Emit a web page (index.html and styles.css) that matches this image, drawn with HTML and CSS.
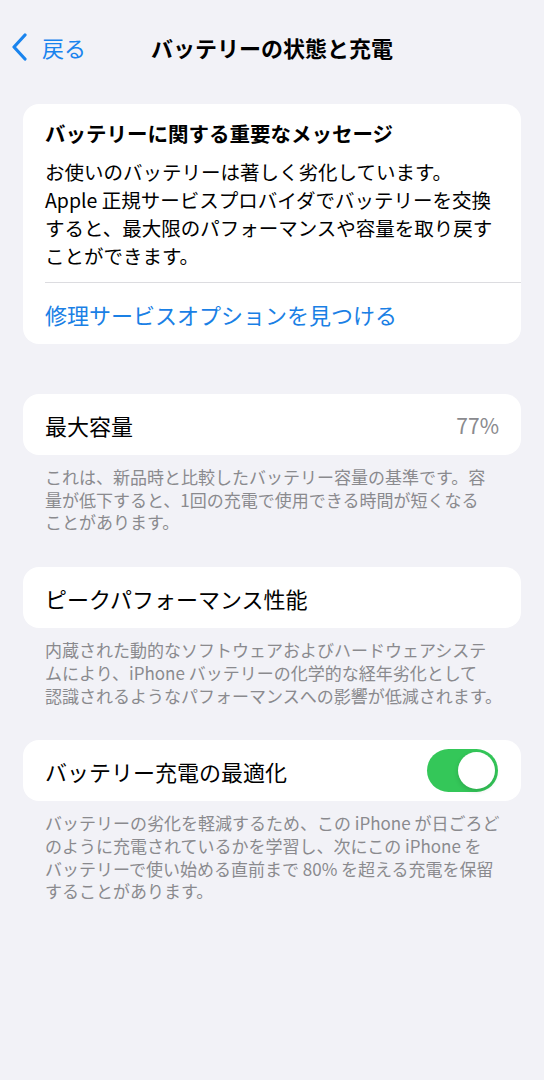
FILE: index.html
```html
<!DOCTYPE html>
<html lang="ja">
<head>
    <meta charset="UTF-8">
    <meta name="viewport" content="width=device-width, initial-scale=1.0">
    <title>バッテリーの状態と充電</title>
    <link rel="stylesheet" href="styles.css">
</head>
<body>
    <div class="nav">
        <div class="back">
            <svg class="chevron" width="20" height="28" viewBox="0 0 20 28">
                <path d="M15 2 L4 14 L15 26" fill="none" stroke="#1a84ee" stroke-width="3.2" stroke-linecap="round" stroke-linejoin="round"/>
            </svg>
            <span>戻る</span>
        </div>
        <div class="nav-title">バッテリーの状態と充電</div>
    </div>

    <div class="content">
        <div class="card message">
            <div class="msg-body">
                <div class="msg-title">バッテリーに関する重要なメッセージ</div>
                <div class="msg-text">お使いのバッテリーは著しく劣化しています。<br>Apple 正規サービスプロバイダでバッテリーを交換<br>すると、最大限のパフォーマンスや容量を取り戻す<br>ことができます。</div>
            </div>
            <div class="msg-link">修理サービスオプションを見つける</div>
        </div>

        <div class="card row first-row">
            <span class="label">最大容量</span>
            <span class="value">77%</span>
        </div>
        <p class="footer">これは、新品時と比較したバッテリー容量の基準です。容<br>量が低下すると、1回の充電で使用できる時間が短くなる<br>ことがあります。</p>

        <div class="card row">
            <span class="label">ピークパフォーマンス性能</span>
        </div>
        <p class="footer">内蔵された動的なソフトウェアおよびハードウェアシステ<br>ムにより、iPhone バッテリーの化学的な経年劣化として<br>認識されるようなパフォーマンスへの影響が低減されます。</p>

        <div class="card row">
            <span class="label">バッテリー充電の最適化</span>
            <div class="toggle"><div class="knob"></div></div>
        </div>
        <p class="footer">バッテリーの劣化を軽減するため、この iPhone が日ごろど<br>のように充電されているかを学習し、次にこの iPhone を<br>バッテリーで使い始める直前まで 80% を超える充電を保留<br>することがあります。</p>
    </div>
</body>
</html>
```

FILE: styles.css
```css
body {
    margin: 0;
    width: 544px;
    height: 1080px;
    background-color: #f2f2f7;
    font-family: "Noto Sans CJK JP", "Noto Sans", sans-serif;
    color: #000;
}

.nav {
    display: flex;
    align-items: center;
    height: 60px;
    margin-top: 17px;
    position: relative;
}

.back {
    display: flex;
    align-items: center;
    padding-left: 10px;
    color: #1a84ee;
    font-size: 22px;
    gap: 12px;
}

.nav-title {
    position: absolute;
    left: 0;
    right: 0;
    top: 0;
    line-height: 60px;
    text-align: center;
    font-size: 22px;
    font-weight: 700;
    pointer-events: none;
}

.content {
    padding: 27px 23px 0 23px;
}

.card {
    background: #fff;
    border-radius: 16px;
}

.message {
    padding-left: 22px;
}

.msg-body {
    padding: 15px 22px 12px 0;
    border-bottom: 1px solid #dcdce0;
}

.msg-title {
    font-size: 20.5px;
    font-weight: 700;
    line-height: 28px;
    margin-bottom: 11px;
}

.msg-text {
    font-size: 19.5px;
    line-height: 28px;
    white-space: nowrap;
}

.msg-link {
    color: #1a80e5;
    font-size: 22px;
    line-height: 28px;
    padding: 17px 0 16px 0;
}

.row {
    display: flex;
    align-items: center;
    justify-content: space-between;
    height: 61px;
    padding: 0 22px;
    margin-top: 33px;
}

.first-row {
    margin-top: 50px;
}

.label {
    font-size: 22px;
}

.value {
    font-size: 21px;
    color: #8a8a8e;
}

.footer {
    margin: 11px 0 0 0;
    padding: 0 22px;
    font-size: 17px;
    line-height: 22.7px;
    color: #8a8a8e;
    white-space: nowrap;
}

.toggle {
    width: 71px;
    height: 43px;
    border-radius: 22px;
    background: #34c759;
    display: flex;
    align-items: center;
    justify-content: flex-end;
    padding: 0 3px;
    box-sizing: border-box;
    margin-right: 1px;
}

.knob {
    width: 37px;
    height: 37px;
    border-radius: 50%;
    background: #fff;
    box-shadow: 0 2px 5px rgba(0, 0, 0, 0.15);
}
```
